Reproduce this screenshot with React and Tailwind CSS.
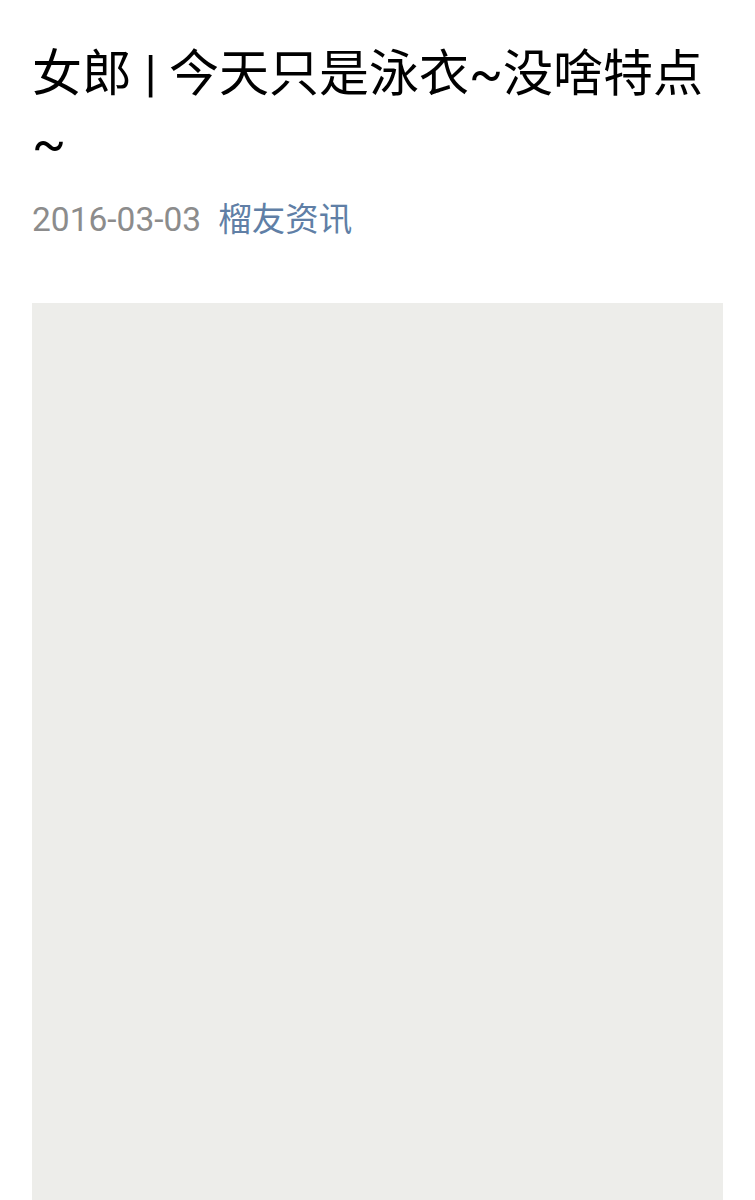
export default function App() {
  return (
    <div className="min-h-[1200px] bg-white px-[32px] pt-[39px]">
      <h1 className="text-[50px] leading-[70px] text-black font-normal [font-family:Roboto,'Noto_Sans_CJK_SC',sans-serif]">
        女郎 | 今天只是泳衣~没啥特点~
      </h1>
      <div className="mt-[21px] flex items-center gap-[17px] text-[33.5px] leading-[40px] [font-family:Roboto,'Noto_Sans_CJK_SC',sans-serif]">
        <span className="text-[#8c8c8c]">2016-03-03</span>
        <span className="text-[#607fa6]">榴友资讯</span>
      </div>
      <div className="mt-[63px] h-[920px] w-[691px] bg-[#ededea]" />
    </div>
  );
}
